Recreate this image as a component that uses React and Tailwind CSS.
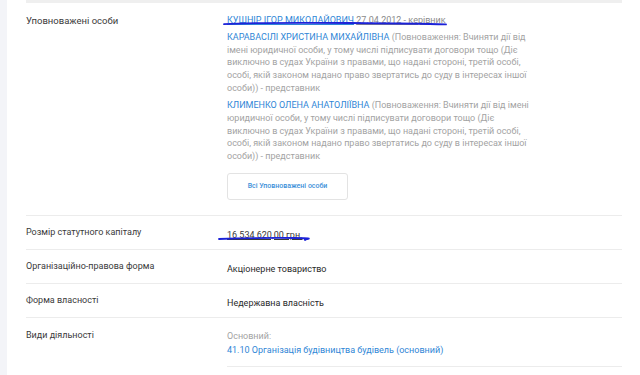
import React from "react";

const font = { fontFamily: "Roboto, 'Noto Sans', sans-serif" };

function Row({ label, children, className = "" }) {
  return (
    <div className={"flex border-b border-[#ececec] " + className}>
      <div className="w-[201px] shrink-0 text-[9px] text-[#3a3a3a]">{label}</div>
      <div className="flex-1">{children}</div>
    </div>
  );
}

export default function App() {
  return (
    <div className="relative flex w-[640px] h-[375px] bg-white overflow-hidden" style={font}>
      <div className="w-[7px] shrink-0 bg-[#f3f4f8]" />
      <div className="ml-[19px] w-[596px]">
        <div className="h-[3px] bg-[#efefef]" />
        <Row label={<div className="pt-[11px] leading-[13px] text-[9.5px]">Уповноважені особи</div>} className="h-[213px]">
          <div className="pt-[11px] w-[302px] text-[9px] leading-[12.65px]">
            <div className="text-[#2f86d6]">
              <span className="underline decoration-[#2f86d6]">КУШНІР ІГОР МИКОЛАЙОВИЧ</span>{" "}
              <span className="text-[#8a8a8a] underline">27.04.2012 - керівник</span>
            </div>
            <div className="mt-[4.5px] text-[#a3a3a3]">
              <span className="text-[#2f86d6]">КАРАВАСІЛІ ХРИСТИНА МИХАЙЛІВНА</span> (Повноваження: Вчиняти дії від імені юридичної особи, у тому числі підписувати договори тощо (Діє виключно в судах України з правами, що надані стороні, третій особі, особі, якій законом надано право звертатись до суду в інтересах іншої особи)) - представник
            </div>
            <div className="mt-[5px] text-[#a3a3a3]">
              <span className="text-[#2f86d6]">КЛИМЕНКО ОЛЕНА АНАТОЛІЇВНА</span> (Повноваження: Вчиняти дії від імені юридичної особи, у тому числі підписувати договори тощо (Діє виключно в судах України з правами, що надані стороні, третій особі, особі, якій законом надано право звертатись до суду в інтересах іншої особи)) - представник
            </div>
            <div className="mt-[10px] w-[121px] h-[27px] border border-[#e3e3e3] rounded-[3px] flex items-center justify-center text-[7px] font-medium text-[#3b8fd9]">
              Всі Уповноважені особи
            </div>
          </div>
        </Row>
        <Row label="Розмір статутного капіталу" className="h-[34px] items-center">
          <span className="text-[9px] text-[#3a3a3a] underline">16 534 620,00 грн.</span>
        </Row>
        <Row label="Організаційно-правова форма" className="h-[34px] items-center">
          <span className="text-[9px] text-[#2a2a2a]">Акціонерне товариство</span>
        </Row>
        <Row label="Форма власності" className="h-[34px] items-center">
          <span className="text-[9px] text-[#2a2a2a]">Недержавна власність</span>
        </Row>
        <div className="flex">
          <div className="w-[201px] shrink-0 pt-[11px] text-[9px] leading-[13px] text-[#3a3a3a]">Види діяльності</div>
          <div className="flex-1 pt-[11px]">
            <div className="text-[9px] leading-[14px] text-[#a3a3a3]">Основний:</div>
            <div className="text-[9px] leading-[14px] text-[#2f86d6]">41.10 Організація будівництва будівель (основний)</div>
            <div className="mt-[9px] border-b border-[#ececec]" />
          </div>
        </div>
      </div>
      <svg className="absolute left-0 top-0 pointer-events-none" width="640" height="375">
        <path d="M224 24.2 C 250 22.6, 300 22.6, 350 23 S 420 23.6, 446 24.4" stroke="#1c22d8" strokeWidth="1.8" fill="none" strokeLinecap="round" />
        <path d="M219 239 C 240 238.2, 270 237.8, 295 238 S 303 239, 305 240" stroke="#1c22d8" strokeWidth="1.8" fill="none" strokeLinecap="round" />
      </svg>
    </div>
  );
}
